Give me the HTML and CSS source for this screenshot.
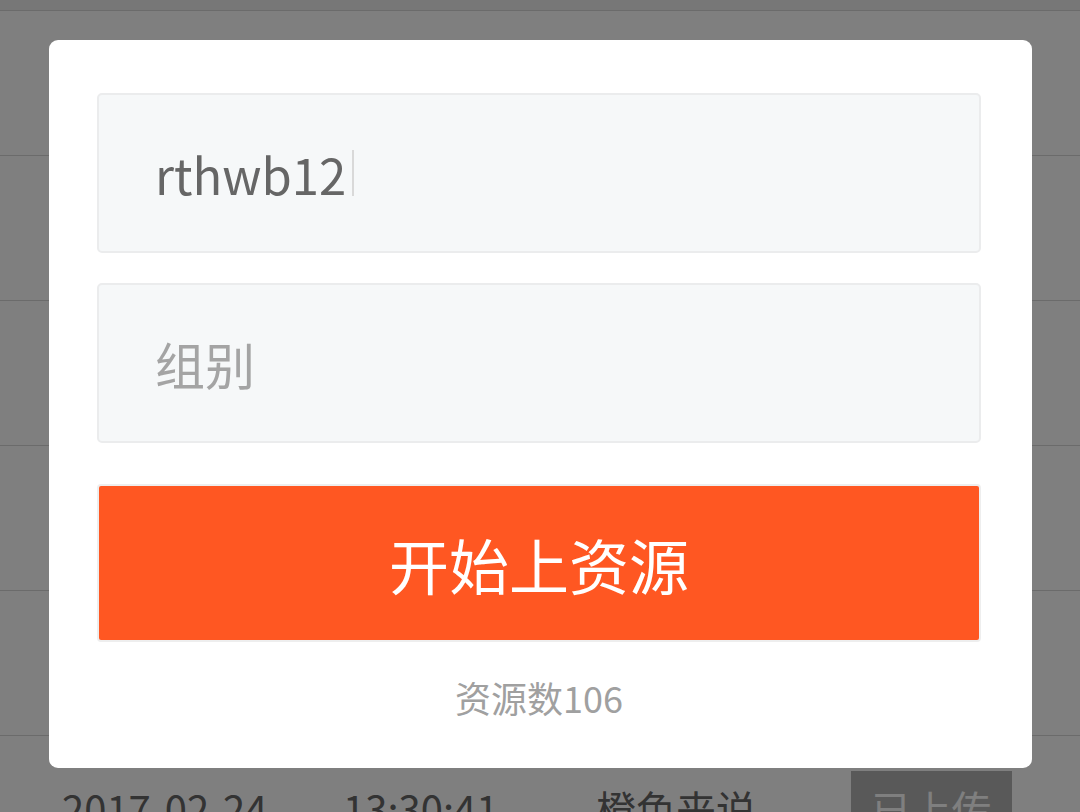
FILE: index.html
```html
<!DOCTYPE html>
<html lang="zh-CN">
<head>
<meta charset="utf-8">
<title>上资源</title>
<link rel="stylesheet" href="styles.css">
</head>
<body>
<div class="page">
  <div class="header"></div>
  <div class="row"></div>
  <div class="row"></div>
  <div class="row"></div>
  <div class="row"></div>
  <div class="row"></div>
  <div class="row">
    <span class="cell date">2017-02-24</span>
    <span class="cell time">13:30:41</span>
    <span class="cell name">橙色来说</span>
    <span class="badge">已上传</span>
  </div>
</div>
<div class="overlay">
  <div class="modal">
    <div class="field"><span class="value">rthwb12</span><span class="caret"></span></div>
    <div class="field"><span class="placeholder">组别</span></div>
    <div class="btn">开始上资源</div>
    <div class="count">资源数106</div>
  </div>
</div>
</body>
</html>
```
FILE: styles.css
```css
* { box-sizing: border-box; }
html, body { margin: 0; padding: 0; }
body {
  width: 1080px;
  height: 812px;
  overflow: hidden;
  background: #ffffff;
  font-family: "Noto Sans CJK SC", "Noto Sans", sans-serif;
}
.page { display: flex; flex-direction: column; }
.header {
  height: 11px;
  background: #eeeeee;
  border-bottom: 1px solid #d6d6d6;
}
.row {
  height: 145px;
  flex: none;
  border-bottom: 1px solid #d6d6d6;
  display: flex;
  align-items: center;
  padding-left: 62px;
  font-size: 40px;
  color: #666666;
}
.cell { white-space: nowrap; }
.date { width: 281px; }
.time { width: 253px; }
.name { width: 255px; }
.badge {
  width: 161px;
  height: 74px;
  background: #b3b3b3;
  color: #ffffff;
  display: flex;
  align-items: center;
  justify-content: center;
  font-size: 40px;
}
.overlay {
  position: fixed;
  inset: 0;
  background: rgba(0, 0, 0, 0.5);
  padding: 40px 48px 0 49px;
}
.modal {
  width: 983px;
  height: 728px;
  background: #ffffff;
  border-radius: 9px;
  padding: 53px 51px 0 48px;
  display: flex;
  flex-direction: column;
}
.field {
  height: 160px;
  border: 2px solid #ebeced;
  border-radius: 5px;
  background: #f6f8f9;
  display: flex;
  align-items: center;
  padding-left: 56px;
  margin-bottom: 30px;
}
.field + .field { margin-bottom: 41px; }
.value { color: #666666; font-size: 49px; }
.caret {
  width: 2px;
  height: 46px;
  background: #d9d9d9;
  margin-left: 6px;
}
.placeholder { color: #a4a4a4; font-size: 50px; }
.btn {
  height: 158px;
  border: 2px solid #eeeeee;
  border-radius: 4px;
  background: #ff5722;
  color: #ffffff;
  font-size: 60px;
  display: flex;
  align-items: center;
  justify-content: center;
}
.count {
  margin-top: 29px;
  text-align: center;
  font-size: 36px;
  color: #a0a0a0;
}
```
